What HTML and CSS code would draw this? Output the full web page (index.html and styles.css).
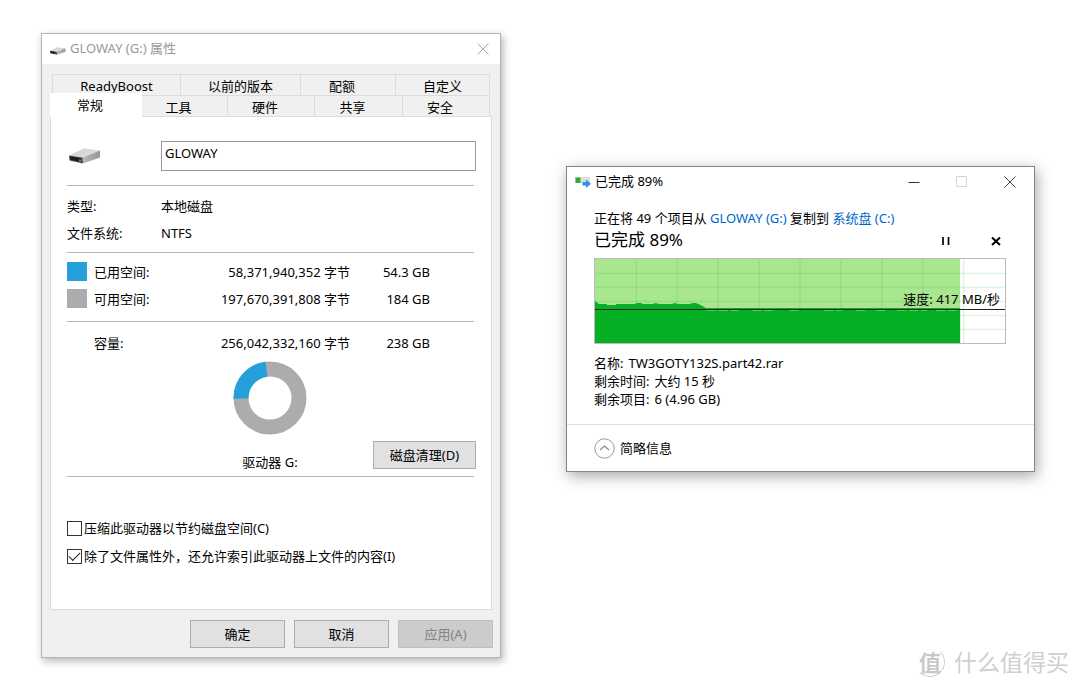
FILE: index.html
```html
<!DOCTYPE html>
<html lang="zh-CN">
<head>
<meta charset="utf-8">
<meta name="viewport" content="width=device-width, initial-scale=1">
<title>GLOWAY (G:) 属性</title>
<link rel="stylesheet" href="styles.css">
</head>
<body>
<svg width="0" height="0" class="defs" aria-hidden="true">
  <defs>
    <linearGradient id="top" x1="0" y1="0" x2="1" y2="1"><stop offset="0" stop-color="#cfcfd1"/><stop offset="1" stop-color="#e2e2e5"/></linearGradient>
    <linearGradient id="side" x1="0" y1="0" x2="1" y2="0"><stop offset="0" stop-color="#b9b9bb"/><stop offset="1" stop-color="#98989a"/></linearGradient>
    <symbol id="drive" viewBox="0 0 32 16">
      <path d="M0 7.500 15 0.500 31 2.500 13.500 9.500Z" fill="url(#top)"/>
      <path d="M13.500 9.500 31 2.500V9.500L14 15.500Z" fill="url(#side)"/>
      <path d="M0 7.500 13.500 9.500 14 15.500 0.500 12.500Z" fill="#4a4a4a"/>
      <path d="M1 8.500 12.500 10.500V14L1.500 11.800Z" fill="#1d1d1d"/>
      <path d="M10 11.500h2.500v2H10Z" fill="#1fc71f"/>
    </symbol>
  </defs>
</svg>
<main class="desktop">
  <section class="window props" aria-label="GLOWAY (G:) 属性">
    <header class="titlebar muted">
      <svg class="title-icon" viewBox="0 0 32 16"><use href="#drive"/></svg>
      <h1 class="title">GLOWAY (G:) 属性</h1>
      <button class="caption" aria-label="关闭"><svg width="12" height="12" viewBox="0 0 12 12"><path d="M.5.5l11 11M11.500.5l-11 11" fill="none" stroke="#a8a8a8"/></svg></button>
    </header>
    <div class="tabs">
      <div class="tab-row back" role="tablist">
        <button class="tab">ReadyBoost</button><button class="tab">以前的版本</button><button class="tab quota">配额</button><button class="tab">自定义</button>
      </div>
      <div class="tab-row front" role="tablist">
        <button class="tab active">常规</button><button class="tab">工具</button><button class="tab">硬件</button><button class="tab">共享</button><button class="tab">安全</button>
      </div>
    </div>
    <div class="panel">
      <div class="name-row">
        <svg class="drive" viewBox="0 0 32 16"><use href="#drive"/></svg>
        <input class="name" type="text" value="GLOWAY" aria-label="名称">
      </div>
      <dl class="facts ruled">
        <dt>类型:</dt><dd>本地磁盘</dd>
        <dt>文件系统:</dt><dd>NTFS</dd>
      </dl>
      <table class="usage ruled">
        <tr><td class="key"><span class="swatch used"></span></td><th>已用空间:</th><td class="bytes">58,371,940,352 字节</td><td class="size">54.3 GB</td><td></td></tr>
        <tr><td class="key"><span class="swatch free"></span></td><th>可用空间:</th><td class="bytes">197,670,391,808 字节</td><td class="size">184 GB</td><td></td></tr>
      </table>
      <table class="usage total ruled">
        <tr><td class="key"></td><th>容量:</th><td class="bytes">256,042,332,160 字节</td><td class="size">238 GB</td><td></td></tr>
      </table>
      <div class="chart-row">
        <div></div>
        <figure class="chart">
          <svg width="74" height="74" viewBox="0 0 74 74">
            <circle cx="37" cy="37" r="29" fill="none" stroke="#acacac" stroke-width="15"/>
            <path d="M8 37.500A29 29 0 0 1 33.500 8.200" fill="none" stroke="#26a0da" stroke-width="15"/>
          </svg>
          <figcaption>驱动器 G:</figcaption>
        </figure>
        <button class="button cleanup">磁盘清理(D)</button>
      </div>
      <div class="options ruled">
        <label class="option"><input type="checkbox">压缩此驱动器以节约磁盘空间(C)</label>
        <label class="option"><input type="checkbox" checked>除了文件属性外，还允许索引此驱动器上文件的内容(I)</label>
      </div>
    </div>
    <footer class="actions">
      <button class="button">确定</button><button class="button">取消</button><button class="button" disabled>应用(A)</button>
    </footer>
  </section>

  <section class="window copy" aria-label="已完成 89%">
    <header class="titlebar">
      <svg class="title-icon" viewBox="0 0 16 12"><path d="M0 1h15v6H0Z" fill="#dedede"/><path d="M0.500 1.500h5v5.500h-5Z" fill="#2bb02b"/><path d="M7.500 6h3.500V3.500l5 4.200-5 4.200V9.500H7.500Z" fill="#2f93e6"/></svg>
      <h1 class="title">已完成 89%</h1>
      <button class="caption" aria-label="最小化"><svg width="12" height="12" viewBox="0 0 12 12"><path d="M.5 6.500h11" stroke="#333"/></svg></button>
      <button class="caption" aria-label="最大化" disabled><svg width="12" height="12" viewBox="0 0 12 12"><path d="M.5 .5h10v10H.5Z" fill="none" stroke="#d4d4d4"/></svg></button>
      <button class="caption" aria-label="关闭"><svg width="12" height="12" viewBox="0 0 12 12"><path d="M.5.5l11 11M11.500.5l-11 11" fill="none" stroke="#444"/></svg></button>
    </header>
    <div class="job">
      <p class="route">正在将 49 个项目从 <a href="#g">GLOWAY (G:)</a> 复制到 <a href="#c">系统盘 (C:)</a></p>
      <div class="status">
        <h2>已完成 89%</h2>
        <button class="tool" aria-label="暂停"><svg width="10" height="10" viewBox="0 0 10 10"><path d="M2 1v8M7.500 1v8" stroke="#000" stroke-width="1.700"/></svg></button>
        <button class="tool" aria-label="取消"><svg width="10" height="10" viewBox="0 0 10 10"><path d="M1 1.500l8 7.500M9 1.500l-8 7.500" stroke="#000" stroke-width="2"/></svg></button>
      </div>
      <div class="graph">
        <svg class="plot" viewBox="0 0 411 84" preserveAspectRatio="none">
          <rect width="411" height="84" fill="#fff"/>
          <rect width="366" height="84" fill="#a8e690"/>
          <g stroke="#06b025" stroke-opacity=".13" stroke-width="1.500">
            <path d="M41.500 0v84M82.500 0v84M123.500 0v84M164.500 0v84M205.500 0v84M246.500 0v84M287.500 0v84M328.500 0v84M369.500 0v84"/>
            <path d="M0 14.500h411M0 28.500h411M0 42.500h411M0 56.500h411M0 70.500h411"/>
          </g>
          <path d="M0 84V42l4 3h8v1h9v-1h19l2-1h4l2 1h10l3-1 3 1h13l3-1 3 1h12l3-1h3l5 2 5 3H366V84Z" fill="#06b025"/>
          <path d="M0 50.500h411" stroke="#222"/>
          <path d="M112 51.500h32M158 51.500h20M195 51.500h10M230 51.500h18M262 51.500h12M282 51.500h10M303 51.500h30M342 51.500h20" stroke="#a8e690" stroke-opacity=".5" stroke-dasharray="9 3"/>
        </svg>
        <span class="speed">速度: 417 MB/秒</span>
      </div>
      <ul class="details">
        <li><span>名称:</span>TW3GOTY132S.part42.rar</li>
        <li><span>剩余时间:</span>大约 15 秒</li>
        <li><span>剩余项目:</span>6 (4.96 GB)</li>
      </ul>
    </div>
    <footer class="less">
      <button class="toggle"><svg width="21" height="21" viewBox="0 0 21 21" fill="none"><circle cx="10.500" cy="10.500" r="9.700" stroke="#999"/><path d="M6 12l4.500-4 4.500 4" stroke="#888" stroke-width="1.200"/></svg>简略信息</button>
    </footer>
  </section>
</main>
<div class="watermark"><span class="badge">值</span>什么值得买</div>
</body>
</html>
```

FILE: styles.css
```css
* { box-sizing: border-box; }
body {
  margin: 0;
  background: #fff;
  color: #000;
  font: 13px/18px "Noto Sans", "Noto Sans CJK SC", sans-serif;
}
h1, h2, p, dl, dd, ul, figure { margin: 0; padding: 0; font-weight: 400; }
ul { list-style: none; }
button, input { font: inherit; color: inherit; }
button { background: none; border: 0; padding: 0; }
svg { display: block; }
.defs { position: absolute; }

.desktop {
  display: grid;
  grid-template-columns: minmax(0, 460fr) minmax(0, 469fr);
  column-gap: 65px;
  align-items: start;
  padding: 33px 45px 24px 41px;
}
.window { border: 1px solid #b4b4b4; background: #fff; }
.props { background: #f0f0f0; box-shadow: 2px 3px 8px rgba(0, 0, 0, .3); }
.copy { margin-top: 133px; border-color: #858585; box-shadow: 2px 4px 14px rgba(0, 0, 0, .35); }

.titlebar { display: flex; align-items: center; height: 30px; padding-left: 8px; background: #fff; }
.title { flex: 1; font-size: 13px; padding-bottom: 2px; }
.title-icon { width: 16px; height: 12px; margin-right: 4px; }
.muted .title-icon { margin-top: 4px; }
.muted .title { color: #999; }
.caption { display: grid; place-items: center; width: 48px; height: 30px; }
.muted .caption { width: 34px; }

.tabs { padding: 10px 10px 0 10px; }
.tab-row { display: grid; }
.back { grid-template-columns: 129fr 120fr 95fr 94fr; }
.front { grid-template-columns: 90fr 86fr 87fr 88fr 87fr; }
.tab { height: 21px; border: 1px solid #dcdcdc; border-width: 1px 1px 0 0; padding-top: 2px; }
.front .tab { padding: 1px 12px 0 0; }
.tab:first-child { border-left-width: 1px; }
.quota { padding-right: 12px; }
.front .active {
  position: relative;
  height: 24px;
  margin: -2px 0 -1px -2px;
  padding: 0 12px 0 0;
  border: 0;
  background: #fff;
}
.panel {
  min-height: 494px;
  margin: 0 8px;
  padding: 24px 15px 0 16px;
  border: 1px solid #dcdcdc;
  background: #fff;
}
.name-row { display: grid; grid-template-columns: 94px 1fr; align-items: center; padding-bottom: 14px; }
.drive { width: 32px; height: 16px; margin-left: 2px; }
.name { width: 100%; height: 30px; border: 1px solid #999; padding: 0 3px 7px; background: #fff; }
.ruled { border-top: 1px solid #b4b4b4; margin-right: 2px; }
.facts { display: grid; grid-template-columns: 94px 1fr; row-gap: 9px; padding: 11px 0 10px; }

.usage { width: calc(100% - 2px); height: 69px; border-collapse: separate; border-spacing: 0; padding: 5px 0 9px; table-layout: fixed; }
.usage td, .usage th { padding: 0; font-weight: 400; text-align: left; white-space: nowrap; }
.usage .key { width: 27px; }
.usage th { width: 96px; }
.usage .bytes { width: 160px; text-align: right; }
.usage .size { width: 80px; text-align: right; }
.swatch { display: block; width: 20px; height: 19px; }
.used { background: #26a0da; }
.free { background: #acacac; }
.usage.total { height: 40px; padding: 2px 0 0; }

.chart-row { display: grid; grid-template-columns: 166px 74px 1fr; align-items: end; padding-bottom: 5px; }
.chart { display: grid; justify-items: center; row-gap: 18px; white-space: nowrap; }
.button { height: 28px; border: 1px solid #adadad; background: #e1e1e1; }
.button:disabled { background: #ccc; border-color: #bfbfbf; color: #838383; }
.cleanup { width: 103px; margin-bottom: 2px; justify-self: end; }
.options { display: grid; row-gap: 10px; padding-top: 42px; }
.option { display: flex; align-items: center; gap: 2px; white-space: nowrap; }
.option input {
  appearance: none;
  display: grid;
  place-items: center;
  width: 15px;
  height: 15px;
  margin: 0;
  border: 1px solid #333;
  background: #fff;
}
.option input:checked::after {
  content: "";
  width: 10px;
  height: 5px;
  margin-bottom: 3px;
  border: solid #222;
  border-width: 0 0 1px 1px;
  transform: rotate(-45deg);
}
.actions { display: flex; justify-content: flex-end; gap: 9px; padding: 10px 7px 9px; }
.actions .button { width: 95px; }

.job { padding: 12px 28px 16px 27px; }
a { color: #0066cc; text-decoration: none; }
.status { display: flex; align-items: center; gap: 30px; height: 26px; }
.status h2 { flex: 1; font-size: 17px; line-height: 26px; }
.tool { display: grid; place-items: center; width: 20px; height: 20px; padding-top: 2px; }
.graph { display: grid; height: 86px; margin: 5px 0 10px; border: 1px solid #bcbcbc; }
.plot, .speed { grid-area: 1 / 1; }
.plot { width: 100%; height: 84px; }
.speed { justify-self: end; padding: 31px 5px 0 0; }
.details li { display: flex; gap: 5px; }
.less { padding: 12px 27px; border-top: 1px solid #dfdfdf; }
.toggle { display: flex; align-items: center; gap: 5px; height: 22px; }

.watermark {
  position: absolute;
  right: 11px;
  bottom: 12px;
  display: flex;
  align-items: center;
  gap: 9px;
  color: #d0d0d0;
  font-size: 23px;
  line-height: 28px;
}
.badge {
  display: grid;
  place-items: center;
  width: 30px;
  height: 30px;
  border: 1px solid;
  border-color: transparent #d0d0d0 #c4c4c4 transparent;
  border-radius: 50%;
  color: #c8c8c8;
  font-size: 22px;
  font-weight: 700;
}
```
